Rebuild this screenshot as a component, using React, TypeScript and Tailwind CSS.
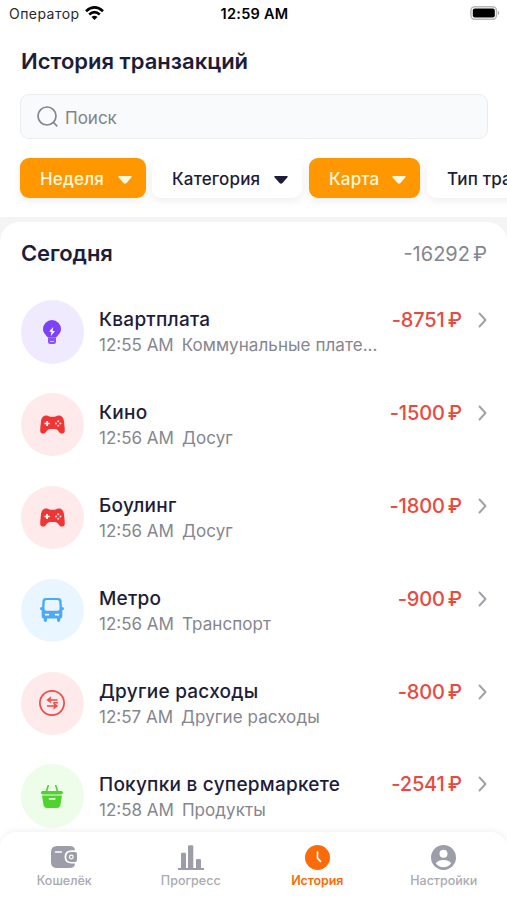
import type { ReactNode } from "react";

function Bulb() {
  return (
    <svg className="h-6 w-[18px]" viewBox="0 0 18 24">
      <path fill="#7b42fa" d="M9 0a9 9 0 0 0-9 9c0 4 3 6 5 8.6h8C15 15 18 13 18 9a9 9 0 0 0-9-9Z" />
      <path fill="#8454f8" d="M5 17.500h8v4.300Q13 24 10.800 24H7.200Q5 24 5 21.800Z" />
      <path d="M7 21.500h4" stroke="#d5c7ff" strokeWidth="1" />
      <path fill="#fff" d="m10.200 7-4 4.500 2.300.6-.8 4.100 4.200-4.900-2.400-.5Z" />
    </svg>
  );
}

function Gamepad() {
  return (
    <svg className="h-[19px] w-[25px]" viewBox="0 0 25 19">
      <path fill="#f03535" d="M6.500.5c2 0 2.500 1.300 4 1.300h4c1.500 0 2-1.300 4-1.300C22 .5 23.800 2.500 24.200 8c.2 3 .8 6.500.5 8.500-.4 2.300-3.700 2.900-5.200.9-1.300-1.900-2.500-3.500-5-3.500h-4c-2.500 0-3.700 1.600-5 3.500-1.500 2-4.800 1.400-5.200-.9C0 14.500.6 11 .8 8 1.200 2.500 3 .5 6.500.5Z" />
      <path d="M4.500 8.500h5.200M7.100 5.900v5.200" stroke="#fff" strokeWidth="1.700" />
      <g fill="#ffd5d5"><circle cx="18.200" cy="6.300" r="1.050" /><circle cx="18.200" cy="10.700" r="1.050" /><circle cx="16" cy="8.500" r="1.050" /><circle cx="20.400" cy="8.500" r="1.050" /></g>
    </svg>
  );
}

function Bus() {
  return (
    <svg className="h-6 w-6" viewBox="0 0 24 24">
      <path fill="#4ca9f8" fillRule="evenodd" d="M6 0h12q3.400 0 3.600 3l.3 6c1.800 0 2.100 1 2.100 1.700 0 .9-.6 1.200-1.700 1.200V18q0 2.500-2 2.500V22q0 2-1.700 2T17 22v-1.500H7V22q0 2-1.700 2T3.700 22v-1.500q-2 0-2-2.500v-6.100C.6 11.900 0 11.600 0 10.700 0 10 .3 9 2.100 9l.3-6Q2.600 0 6 0Zm.7 2Q5 2 4.800 3.600L4.400 10q-.1 2.700 1.900 2.700h11.400q2 0 1.900-2.700l-.4-6.400Q19 2 17.300 2Z" />
      <path d="M5.700 16.600h2.600m7.400 0h2.600" stroke="#fff" strokeWidth="1.900" strokeLinecap="round" />
    </svg>
  );
}

function Exchange() {
  return (
    <svg className="size-[26px]" viewBox="0 0 26 26" fill="none" stroke="#ee4a48">
      <circle cx="13" cy="13" r="12.100" strokeWidth="1.700" />
      <path strokeWidth="1.500" d="M9 9.900h9.500M8 16h9.500M14.500 12.700h4.300" />
      <path fill="#ee4a48" strokeWidth=".5" d="m12 6.700-4.300 3.200 4.300 3.200-.8-3.200Zm2.500 6.100 4.300 3.200-4.300 3.200.8-3.200Z" />
    </svg>
  );
}

function Basket() {
  return (
    <svg className="h-[23px] w-[22px]" viewBox="0 0 22 23">
      <path d="M7.200.8 5.200 7M14.800.8l2 6.200" stroke="#50cc31" strokeWidth="1.600" strokeLinecap="round" />
      <path fill="#50d32e" d="M2 6h18q2 0 2 1.500T20 9.500H2Q0 9.500 0 7.500T2 6ZM1 10.400h20l-1.500 9.300q-.5 3.300-3.700 3.300H6.200q-3.200 0-3.700-3.300Z" />
      <path d="M8.500 13.800h5.300" stroke="#e5ffdd" strokeWidth="1.700" strokeLinecap="round" />
    </svg>
  );
}

function WalletIcon() {
  return (
    <svg className="h-[22px] w-[26px]" viewBox="0 0 26 22">
      <path fill="#9c9da9" d="M6 0h12q6 0 6 4.300h-3.500q-7 .4-7 6.600t7 6.600H24Q24 22 18 22H6q-6 0-6-6V6q0-6 6-6Z" />
      <path fill="#9c9da9" d="M20.500 6H24q2 0 2 2v6q0 2-2 2h-3.500Q15.300 16 15.300 11t5.200-5Z" />
      <path d="M4.500 6h6" stroke="#fff" strokeWidth="1.500" strokeLinecap="round" />
      <circle cx="20.300" cy="11" r="2.400" fill="#fff" /><circle cx="20.300" cy="11" r="1.200" fill="#9c9da9" />
    </svg>
  );
}

function BarsIcon() {
  return (
    <svg className="h-[25px] w-[26px]" viewBox="0 0 26 25" fill="#9c9da9">
      <path d="M0 23h26v2H0ZM3 9q0-1.200 1.200-1.200h2.600Q8 7.800 8 9v15H3Zm7-7.500Q10 .3 11.200.3h2.900q1.200 0 1.200 1.200V24H10ZM18 15.300q0-1.200 1.200-1.200h2.600q1.200 0 1.200 1.200V24h-5Z" />
    </svg>
  );
}

function ClockIcon() {
  return (
    <svg className="size-[25px]" viewBox="0 0 25 25">
      <circle cx="12.500" cy="12.500" r="12.500" fill="#fd6b09" />
      <path d="M12.500 7v6.200l3 3.100" fill="none" stroke="#fff" strokeWidth="1.700" strokeLinecap="round" />
    </svg>
  );
}

function PersonIcon() {
  return (
    <svg className="size-[25px]" viewBox="0 0 25 25">
      <circle cx="12.500" cy="12.500" r="12.500" fill="#9c9da9" />
      <circle cx="12.500" cy="8.700" r="4" fill="#fff" />
      <path fill="#fff" d="M5 18.500c0-2 4.500-3.600 7.500-3.600s7.500 1.600 7.500 3.600c-1.500 2.400-4.500 3.700-7.500 3.700S6.500 20.900 5 18.500Z" />
    </svg>
  );
}

function Amount({ value }: { value: string }) {
  return <>{value}<span className="ml-[3px] tracking-normal">₽</span></>;
}

type Transaction = { title: string; time: string; category: string; amount: string; tint: string; icon: ReactNode };

const transactions: Transaction[] = [
  { title: "Квартплата", time: "12:55 AM", category: "Коммунальные плате...", amount: "-8751", tint: "bg-[#f0eaff]", icon: <Bulb /> },
  { title: "Кино", time: "12:56 AM", category: "Досуг", amount: "-1500", tint: "bg-[#feeaea]", icon: <Gamepad /> },
  { title: "Боулинг", time: "12:56 AM", category: "Досуг", amount: "-1800", tint: "bg-[#feeaea]", icon: <Gamepad /> },
  { title: "Метро", time: "12:56 AM", category: "Транспорт", amount: "-900", tint: "bg-[#eaf6ff]", icon: <Bus /> },
  { title: "Другие расходы", time: "12:57 AM", category: "Другие расходы", amount: "-800", tint: "bg-[#feeaea]", icon: <Exchange /> },
  { title: "Покупки в супермаркете", time: "12:58 AM", category: "Продукты", amount: "-2541", tint: "bg-[#edfde9]", icon: <Basket /> },
];

function Row({ item }: { item: Transaction }) {
  return (
    <li className="flex h-[92.9px] items-start pl-[0.5px]">
      <div className={`flex size-[63.5px] shrink-0 items-center justify-center rounded-full ${item.tint}`}>{item.icon}</div>
      <div className="ml-[15px] min-w-0 flex-1 pt-[7px]">
        <div className="flex h-[26px] items-center justify-between whitespace-nowrap">
          <span className="pt-px text-[19px] font-medium tracking-[0.24px] text-[#1d1d39]">{item.title}</span>
          <span className="text-[20px] font-medium tracking-[-0.15px] text-[#e84a40]"><Amount value={item.amount} /></span>
        </div>
        <p className="flex h-[26px] items-center gap-2 whitespace-nowrap text-[17px] text-[#85868e]"><span>{item.time}</span><span className="tracking-[0.07px]">{item.category}</span></p>
      </div>
      <svg className="ml-4 mt-3 h-4 w-[9px] shrink-0" viewBox="0 0 9 16" fill="none"><path d="m1.500 1.500 6 6.500-6 6.500" stroke="#a0a1a6" strokeWidth="1.900" strokeLinecap="round" strokeLinejoin="round" /></svg>
    </li>
  );
}

function Filter({ label, sizing, active }: { label: string; sizing: string; active?: boolean }) {
  return (
    <button className={`flex h-10 shrink-0 items-center justify-between rounded-[9px] pl-5 pr-[14px] text-[17px] font-medium whitespace-nowrap shadow-[0_3px_8px_rgba(0,0,0,0.07)] ${sizing} ${active ? "bg-[#ff9800] text-[#fff8de]" : "bg-white text-[#1d1d39]"}`}>
      <span className="pt-[3px] tracking-[0.15px]">{label}</span>
      <svg className="mt-[3px] h-[8px] w-[14px] shrink-0" viewBox="0 0 14 8"><path fill="currentColor" d="M1.400 0h11.200q2 0 .7 1.500L8.500 6.900Q7 8.500 5.500 6.900L.7 1.500Q-.6 0 1.400 0Z" /></svg>
    </button>
  );
}

function Tab({ label, icon, active }: { label: string; icon: ReactNode; active?: boolean }) {
  return (
    <div className={`flex flex-1 flex-col items-center pt-3 text-[12.5px] ${active ? "font-semibold tracking-[-0.1px] text-[#fd6b09]" : "font-medium text-[#aaaab2]"}`}>
      <div className="flex h-[26px] items-center">{icon}</div><span className="mt-[3px] leading-4">{label}</span>
    </div>
  );
}

export default function App() {
  return (
    <div className="flex h-[900px] w-[507px] flex-col overflow-hidden bg-[#f4f4f5] font-['Inter',sans-serif]">
      <header className="h-[217px] shrink-0 bg-white">
        <div className="grid h-[28px] grid-cols-3 items-center pl-[9px] pr-[7px] text-[14px] leading-none text-black">
          <div className="flex items-center gap-[5px]"><span className="tracking-[0.45px] text-[#29292b]">Оператор</span>
            <svg className="-mt-[3px] h-[14px] w-[19px]" viewBox="0 0 19 14" fill="none" stroke="#000" strokeWidth="2.600"><path d="M1 5.200q8.500-7.500 17 0M4.200 8.500q5.300-4.700 10.600 0" /><path fill="#000" stroke="none" d="M6.500 11q3-2.300 6 0l-3 3Z" /></svg>
          </div>
          <span className="text-center text-[14.5px] font-semibold tracking-[0.25px]">12:59 AM</span>
          <svg className="-mt-0.5 h-[14px] w-[30px] justify-self-end" viewBox="0 0 30 14"><rect x=".9" y=".7" width="25.600" height="12.600" rx="4" fill="#fff" stroke="#b8b8b8" strokeWidth="1.500" /><rect x="2.800" y="2.500" width="22" height="9" rx="2" /><path d="M28 4.800q2.500 2.200 0 4.400Z" fill="#aaa" /></svg>
        </div>
        <h1 className="ml-[21px] mt-[17px] h-[32px] text-[22px] leading-[32px] font-semibold text-[#1d1d39]">История транзакций</h1>
        <div className="ml-5 mr-[19px] mt-[17px] flex h-[45px] items-center gap-[7px] rounded-[9px] border border-[#eaecee] bg-[#f9fafc] pl-4 text-[17px] text-[#818389]">
          <svg className="h-[21px] w-[21px]" viewBox="0 0 21 21" fill="none" stroke="#85868c" strokeWidth="1.700" strokeLinecap="round"><circle cx="10" cy="10" r="9" /><path d="m16.500 16.500 3.300 3.300" /></svg>
          <span className="pt-1">Поиск</span>
        </div>
        <div className="mt-[19px] flex h-[55px] overflow-hidden pl-5">
          <Filter label="Неделя" sizing="w-[126px] mr-[6px]" active /><Filter label="Категория" sizing="w-[150px] mr-[7px]" /><Filter label="Карта" sizing="w-[111px] mr-[7px]" active /><Filter label="Тип транзакции" sizing="w-[190px]" />
        </div>
      </header>
      <main className="mt-[5px] h-[630px] shrink-0 overflow-hidden rounded-t-[20px] bg-white pl-5 pr-5">
        <div className="flex h-[62px] items-center justify-between"><h2 className="pl-px text-[22px] font-semibold tracking-[-0.1px] text-[#1d1d39]">Сегодня</h2><span className="pt-px text-[20px] text-[#85868e]"><Amount value="-16292" /></span></div>
        <ul className="mt-4">{transactions.map((item) => <Row key={item.title} item={item} />)}</ul>
      </main>
      <nav className="relative -mt-5 flex h-[68px] shrink-0 rounded-t-[16px] bg-white pl-px shadow-[0_-2px_6px_rgba(0,0,0,0.05)]">
        <Tab label="Кошелёк" icon={<WalletIcon />} /><Tab label="Прогресс" icon={<BarsIcon />} /><Tab label="История" icon={<ClockIcon />} active /><Tab label="Настройки" icon={<PersonIcon />} />
      </nav>
    </div>
  );
}
